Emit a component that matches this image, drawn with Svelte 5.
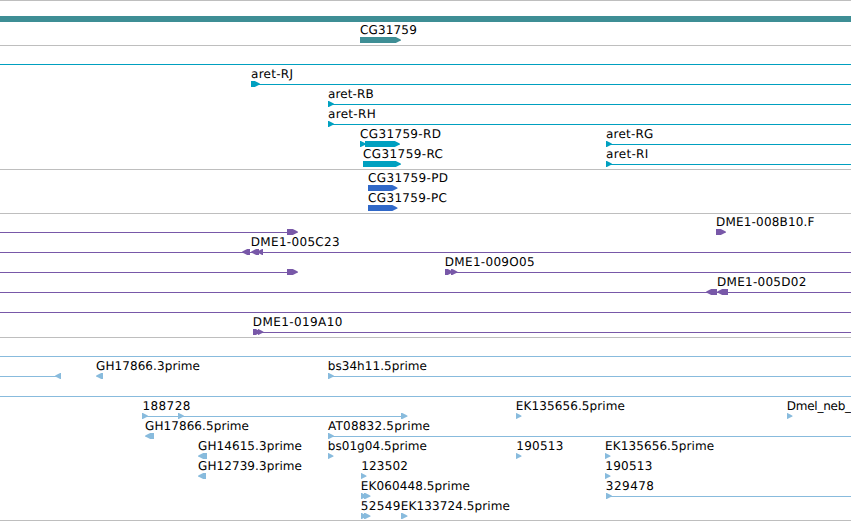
<script>
    const WIDTH = 851;

    // spans: [from, to], arrows: [from, to, direction], labels: [x, text, width]
    const tracks = [
        {
            name: 'gene', color: '#3e8e95', height: 45, pitch: 21,
            rows: [
                { bars: [[0, WIDTH]] },
                { arrows: [[360, 401, 1]], labels: [[360, 'CG31759', 56.8]] }
            ]
        },
        {
            name: 'transcript', color: '#00a0c0', height: 124, pitch: 20,
            rows: [
                { spans: [[0, WIDTH]] },
                { spans: [[251, WIDTH]], arrows: [[251, 260, 1]], labels: [[251, 'aret-RJ', 42]] },
                { spans: [[328, WIDTH]], arrows: [[328, 334, 1]], labels: [[328, 'aret-RB', 45.7]] },
                { spans: [[328, WIDTH]], arrows: [[328, 334, 1]], labels: [[328, 'aret-RH', 47.7]] },
                {
                    spans: [[360, 366], [606, WIDTH]],
                    arrows: [[360, 366, 1], [365, 400, 1], [606, 612, 1]],
                    labels: [[360, 'CG31759-RD', 81], [606, 'aret-RG', 47.3]]
                },
                {
                    spans: [[606, WIDTH]],
                    arrows: [[363, 401, 1], [606, 612, 1]],
                    labels: [[363, 'CG31759-RC', 80], [606, 'aret-RI', 42.3]]
                }
            ]
        },
        {
            name: 'protein', color: '#3068c8', height: 44, pitch: 20,
            rows: [
                { arrows: [[368, 397.5, 1]], labels: [[368, 'CG31759-PD', 80]] },
                { arrows: [[368, 397.5, 1]], labels: [[368, 'CG31759-PC', 79]] }
            ]
        },
        {
            name: 'bac', color: '#7858a8', height: 124, pitch: 20,
            rows: [
                { spans: [[0, 290]], arrows: [[287, 298, 1], [716, 726, 1]], labels: [[716, 'DME1-008B10.F', 98.5]] },
                { spans: [[0, WIDTH]], arrows: [[242, 250, -1], [251, 259, -1], [257, 263, -1]], labels: [[250.8, 'DME1-005C23', 88.8]] },
                { spans: [[0, 290], [445, WIDTH]], arrows: [[287, 298, 1], [445, 453, 1], [451, 457.5, 1]], labels: [[444.8, 'DME1-009O05', 89.8]] },
                { spans: [[0, WIDTH]], arrows: [[706, 717, -1], [717, 728, -1]], labels: [[717, 'DME1-005D02', 89.3]] },
                { spans: [[0, WIDTH]] },
                { spans: [[253, WIDTH]], arrows: [[253, 261, 1], [258, 263.5, 1]], labels: [[252.8, 'DME1-019A10', 89.5]] }
            ]
        },
        {
            name: 'est', color: '#88bbdd', height: 183, pitch: 20,
            rows: [
                { spans: [[0, WIDTH]] },
                {
                    spans: [[0, 58], [328, WIDTH]],
                    arrows: [[55, 61, -1], [96, 103, -1], [328, 334, 1]],
                    labels: [[96, 'GH17866.3prime', 104], [327.7, 'bs34h11.5prime', 99.3]]
                },
                { spans: [[0, WIDTH]] },
                {
                    spans: [[142, 404]],
                    arrows: [[142, 148, 1], [178, 184, 1], [401, 407.5, 1], [516, 521.5, 1], [787, 792.5, 1]],
                    labels: [[142.5, '188728', 47.8], [515.8, 'EK135656.5prime', 109.2], [786.8, 'Dmel_neb_', 64.2]]
                },
                {
                    spans: [[328, WIDTH]],
                    arrows: [[145, 154, -1], [328, 334, 1]],
                    labels: [[145, 'GH17866.5prime', 104], [328, 'AT08832.5prime', 102]]
                },
                {
                    arrows: [[198, 207, -1], [328, 333.5, 1], [516, 521.5, 1], [605, 610.5, 1]],
                    labels: [[198, 'GH14615.3prime', 104], [327.7, 'bs01g04.5prime', 99.3], [516.3, '190513', 47], [605, 'EK135656.5prime', 109.2]]
                },
                {
                    arrows: [[198, 206, -1], [361, 366.5, 1], [605, 610.5, 1]],
                    labels: [[198, 'GH12739.3prime', 104], [361.2, '123502', 46.8], [605.3, '190513', 47]]
                },
                {
                    spans: [[606, WIDTH]],
                    arrows: [[361, 367, 1], [364, 370.5, 1], [606, 612, 1]],
                    labels: [[360.8, 'EK060448.5prime', 109.2], [605.8, '329478', 48.2]]
                },
                {
                    arrows: [[361, 367, 1], [364, 370.5, 1], [401, 407.5, 1]],
                    labels: [[360.7, '52549', 39.6], [400.8, 'EK133724.5prime', 109.2]]
                }
            ]
        }
    ];

    // the head is slightly rounded, so it bends once between shoulder and tip
    function arrowPoints([from, to, dir], y) {
        const back = dir > 0 ? from : to;
        const tip = dir > 0 ? to : from;
        const head = 5.2 * dir;
        const bend = 2.2 * dir;
        return [
            [back, y - 3],
            [tip - head, y - 3],
            [tip - bend, y - 1.6],
            [tip, y - 0.3],
            [tip, y + 0.4],
            [tip - bend, y + 1.6],
            [tip - head, y + 3],
            [back, y + 3]
        ].map((p) => p.join(',')).join(' ');
    }
</script>

<main>
    {#each tracks as track}
        <section class="track {track.name}">
            <svg width={WIDTH} height={track.height - 1} viewBox="0 1 {WIDTH} {track.height - 1}" fill={track.color}>
                {#each track.rows as row, i}
                    {@const y = 19 + i * track.pitch}
                    {#each row.bars ?? [] as [from, to]}
                        <rect x={from} y={y - 3} width={to - from} height="6" />
                    {/each}
                    {#each row.spans ?? [] as [from, to]}
                        <rect x={from} {y} width={to - from} height="1" />
                    {/each}
                    {#each row.arrows ?? [] as arrow}
                        <polygon points={arrowPoints(arrow, y)} />
                    {/each}
                    {#each row.labels ?? [] as [x, text, width]}
                        <text {x} y={y - 6} textLength={width}>{text}</text>
                    {/each}
                {/each}
            </svg>
        </section>
    {/each}
</main>

<style>
    :global(body) {
        background: #fff;
    }

    main {
        width: 851px;
        height: 520px;
        overflow: hidden;
        border-bottom: 1px solid #bebebe;
    }

    .track {
        border-top: 1px solid #bebebe;
    }

    svg {
        display: block;
    }

    text {
        font-family: "DejaVu Sans", sans-serif;
        font-size: 12px;
        fill: #000;
        text-rendering: geometricPrecision;
    }
</style>
